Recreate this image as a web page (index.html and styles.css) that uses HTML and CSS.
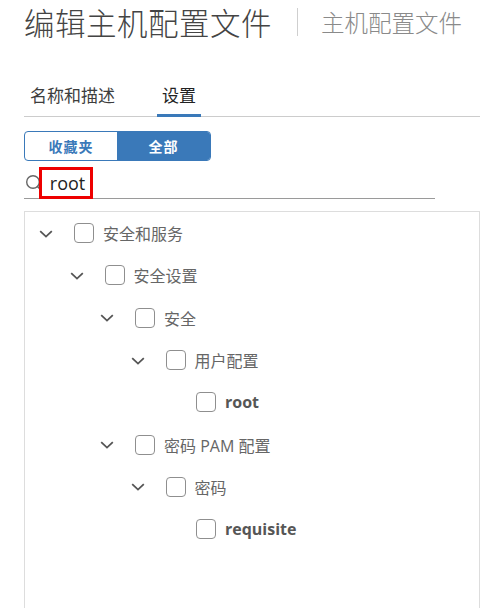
FILE: index.html
```html
<!DOCTYPE html>
<html lang="zh">
<head>
<meta charset="utf-8">
<link rel="stylesheet" href="styles.css">
</head>
<body>
<div class="page">
  <header class="header">
    <h1 class="title">编辑主机配置文件</h1>
    <span class="divider"></span>
    <span class="subtitle">主机配置文件</span>
  </header>

  <nav class="tabs">
    <span class="tab">名称和描述</span>
    <span class="tab active">设置</span>
  </nav>

  <div class="segmented">
    <span class="seg">收藏夹</span>
    <span class="seg on">全部</span>
  </div>

  <div class="search">
    <svg class="search-icon" width="18" height="18" viewBox="0 0 18 18"><circle cx="8" cy="8" r="6.3" fill="none" stroke="#666" stroke-width="1.4"/><path d="M12.5 12.5 L16 16" stroke="#666" stroke-width="1.6" stroke-linecap="round"/></svg>
    <span class="query">root</span>
  </div>

  <div class="tree">
    <div class="row l0"><svg class="chev" width="14" height="8" viewBox="0 0 14 8"><path d="M1.2 1.2 L7 6.6 L12.8 1.2" fill="none" stroke="#555" stroke-width="1.8"/></svg><span class="cb"></span><span class="label">安全和服务</span></div>
    <div class="row l1"><svg class="chev" width="14" height="8" viewBox="0 0 14 8"><path d="M1.2 1.2 L7 6.6 L12.8 1.2" fill="none" stroke="#555" stroke-width="1.8"/></svg><span class="cb"></span><span class="label">安全设置</span></div>
    <div class="row l2"><svg class="chev" width="14" height="8" viewBox="0 0 14 8"><path d="M1.2 1.2 L7 6.6 L12.8 1.2" fill="none" stroke="#555" stroke-width="1.8"/></svg><span class="cb"></span><span class="label">安全</span></div>
    <div class="row l3"><svg class="chev" width="14" height="8" viewBox="0 0 14 8"><path d="M1.2 1.2 L7 6.6 L12.8 1.2" fill="none" stroke="#555" stroke-width="1.8"/></svg><span class="cb"></span><span class="label">用户配置</span></div>
    <div class="row l4"><span class="chev-space"></span><span class="cb"></span><span class="label leaf">root</span></div>
    <div class="row l2"><svg class="chev" width="14" height="8" viewBox="0 0 14 8"><path d="M1.2 1.2 L7 6.6 L12.8 1.2" fill="none" stroke="#555" stroke-width="1.8"/></svg><span class="cb"></span><span class="label">密码 PAM 配置</span></div>
    <div class="row l3"><svg class="chev" width="14" height="8" viewBox="0 0 14 8"><path d="M1.2 1.2 L7 6.6 L12.8 1.2" fill="none" stroke="#555" stroke-width="1.8"/></svg><span class="cb"></span><span class="label">密码</span></div>
    <div class="row l4"><span class="chev-space"></span><span class="cb"></span><span class="label leaf">requisite</span></div>
  </div>
</div>
</body>
</html>
```

FILE: styles.css
```css
* { box-sizing: border-box; }
html, body { margin: 0; padding: 0; background: #fff; }
body {
  font-family: "Open Sans", "Noto Sans CJK SC", sans-serif;
  color: #333;
  overflow: hidden;
}
.page { padding-left: 24px; }

.header {
  display: flex;
  align-items: center;
  height: 44px;
}
.title {
  margin: 0;
  font-family: "Noto Sans CJK SC Light", "Noto Sans CJK SC", sans-serif;
  font-weight: 300;
  font-size: 30.5px;
  line-height: 44px;
  color: #444;
  letter-spacing: 0.5px;
}
.divider {
  width: 1px;
  height: 28px;
  background: #cfcfcf;
  margin: 0 23px 0 25px;
}
.subtitle {
  font-family: "Noto Sans CJK SC Light", "Noto Sans CJK SC", sans-serif;
  font-weight: 300;
  font-size: 23.5px;
  color: #8a8a8a;
}

.tabs {
  display: flex;
  margin-top: 33px;
  border-bottom: 1px solid #cccccc;
  height: 40px;
}
.tab {
  font-family: "Noto Sans CJK SC", sans-serif;
  font-size: 17px;
  line-height: 35px;
  color: #3d3d3d;
  padding: 0 5px;
  height: 40px;
  margin-bottom: -1px;
  border-bottom: 3px solid transparent;
}
.tab:first-child { margin-left: 1px; margin-right: 37px; }
.tab.active { border-bottom-color: #3a79b9; color: #222; }

.segmented {
  display: flex;
  margin-top: 14px;
  width: 187px;
  height: 30px;
  border: 1px solid #3a79b9;
  border-radius: 4px;
  overflow: hidden;
}
.seg {
  flex: 0 0 92px;
  display: flex;
  align-items: center;
  justify-content: center;
  font-family: "Noto Sans CJK SC", sans-serif;
  font-weight: 700;
  font-size: 14px;
  color: #3a79b9;
  letter-spacing: 1px;
}
.seg.on { flex: 1; background: #3a79b9; color: #fff; }

.search {
  display: flex;
  align-items: center;
  width: 411px;
  height: 38px;
  border-bottom: 1px solid #9a9a9a;
}
.search-icon { margin-left: 1px; margin-top: 6px; flex: none; }
.query {
  margin-left: -4px;
  margin-top: 6px;
  width: 54px;
  height: 32px;
  border: 3px solid #ee0000;
  display: flex;
  align-items: center;
  justify-content: center;
  padding-left: 3px;
  font-size: 18px;
  color: #222;
  background: #fff;
  position: relative;
}

.tree {
  margin-top: 12px;
  height: 420px;
  border: 1px solid #dddddd;
  border-bottom: none;
}
.row {
  display: flex;
  align-items: center;
  height: 42.3px;
  padding-left: 14px;
}
.row.l1 { padding-left: 44.5px; }
.row.l2 { padding-left: 75px; }
.row.l3 { padding-left: 105.5px; }
.row.l4 { padding-left: 136px; }
.chev, .chev-space { flex: none; width: 14px; height: 8px; margin-top: 1px; }
.cb {
  flex: none;
  width: 20px;
  height: 20px;
  margin-left: 21px;
  border: 1px solid #8f8f8f;
  border-radius: 4px;
  background: #fff;
}
.label {
  margin-left: 9px;
  font-size: 16px;
  color: #666;
}
.label.leaf { font-weight: 700; color: #565656; }
```
